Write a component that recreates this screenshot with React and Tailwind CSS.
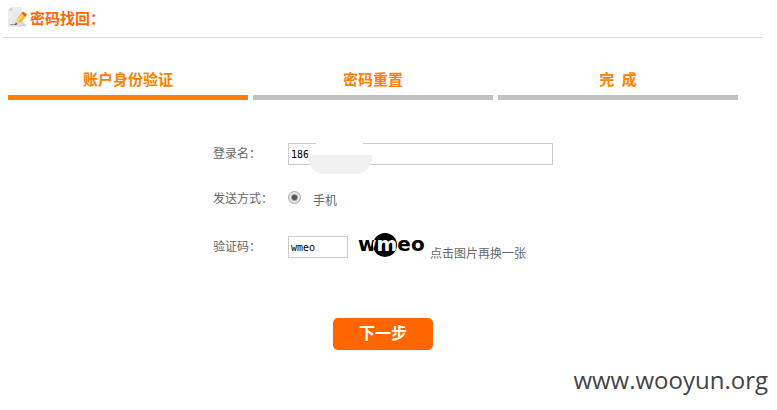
import React, { useState } from "react";

function NotePencilIcon() {
  return (
    <svg width="20" height="20" viewBox="0 0 20 20" aria-hidden="true" className="shrink-0">
      <defs>
        <linearGradient id="paper" x1="0" y1="0" x2="1" y2="1">
          <stop offset="0" stopColor="#f4f4f4" />
          <stop offset="0.6" stopColor="#e4e4e4" />
          <stop offset="1" stopColor="#cfcfcf" />
        </linearGradient>
      </defs>
      <path d="M4 0 H13.500 L15 15 L19 19 Q10 20 0 19.500 V4 Z" fill="url(#paper)" />
      <path d="M0 4 L4 0 L4.500 3.500 Z" fill="#cccccc" />
      <path d="M2 17.500 H9" stroke="#9a9a9a" strokeWidth="1" />
      <path d="M8.500 13 L13.500 6 L18 9.500 L12.500 16 Z" fill="#fbb829" />
      <path d="M10 13.500 L15 7.500" stroke="#ffdc68" strokeWidth="1.800" />
      <path d="M13.500 6.500 L15 4.500 L19 7.500 L17.500 9.800 Z" fill="#d9601f" />
      <path d="M8.500 13 L12.500 16 L7 18 Z" fill="#f1d9a8" />
      <path d="M7.800 15.500 L9.500 17 L6.800 18.200 Z" fill="#3c3c3c" />
    </svg>
  );
}

function Captcha() {
  return (
    <svg width="68" height="30" viewBox="0 0 68 30" role="img" aria-label="wmeo">
      <defs>
        <clipPath id="disc">
          <ellipse cx="27" cy="13" rx="12" ry="12" />
        </clipPath>
      </defs>
      <g fontFamily="'DejaVu Sans', sans-serif" fontWeight="bold" fontSize="20">
        <text x="0" y="19" fill="#000">wmeo</text>
        <ellipse cx="27" cy="13" rx="12" ry="12" fill="#000" />
        <text x="0" y="19" fill="#fff" clipPath="url(#disc)">wmeo</text>
      </g>
    </svg>
  );
}

const steps = ["账户身份验证", "密码重置", "完\u2002成"];

export default function App() {
  const [login, setLogin] = useState("186");
  const [code, setCode] = useState("wmeo");
  const field =
    "h-[22px] border border-[#cccccc] bg-white px-[2px] font-['DejaVu_Sans_Mono',monospace] text-[10px] text-black outline-none";

  return (
    <div className="bg-white pr-[14px] pl-[3px] font-['Liberation_Sans','Noto_Sans_CJK_SC',sans-serif] text-[12px] text-[#666666]">
      <header className="flex h-[38px] items-center gap-[2px] border-b border-[#d9d9d9] pb-[3px] pl-[5px]">
        <NotePencilIcon />
        <h1 className="pt-[3px] text-[15px] leading-5 font-bold text-[#ff6600]">密码找回：</h1>
      </header>

      <ol className="mt-8 mr-[25px] ml-[5px] flex gap-[5px]">
        {steps.map((step, i) => (
          <li
            key={step}
            className={`flex-1 border-b-[5px] pb-[5px] text-center text-[15px] leading-5 font-bold text-[#ff8000] ${
              i === 0 ? "border-[#ff8000]" : "border-[#c1c1c1]"
            }`}
          >
            {step}
          </li>
        ))}
      </ol>

      <form className="mx-auto mt-[43px] w-[340px]" onSubmit={(e) => e.preventDefault()}>
        <div className="flex items-center">
          <label htmlFor="login" className="w-[75px]">登录名：</label>
          <div className="relative flex flex-1">
            <input
              id="login"
              value={login}
              onChange={(e) => setLogin(e.target.value)}
              className={`${field} w-full`}
            />
            <span className="absolute top-0 left-7 h-3 w-[47px] bg-white" />
            <span className="absolute top-3 left-5 h-[19px] w-16 rounded-b-[16px] bg-[#f1f1f1]" />
          </div>
        </div>

        <div className="mt-6 flex h-5 items-start" role="group" aria-labelledby="method">
          <span id="method" className="w-[75px] leading-5">发送方式：</span>
          <label className="flex items-start gap-3 leading-6">
            <input
              type="radio"
              name="method"
              defaultChecked
              className="mt-[2px] size-[13px] appearance-none rounded-full border border-[#a9a9a9] bg-[radial-gradient(circle,#555555_0_2px,#e6e6e6_4px)]"
            />
            手机
          </label>
        </div>

        <div className="mt-[23px] flex h-[30px] items-center">
          <label htmlFor="code" className="w-[75px]">验证码：</label>
          <input
            id="code"
            value={code}
            onChange={(e) => setCode(e.target.value)}
            className={`${field} w-[60px]`}
          />
          <button type="button" className="ml-[10px] flex items-end gap-1">
            <Captcha />
            <span className="whitespace-nowrap leading-4">点击图片再换一张</span>
          </button>
        </div>

        <div className="mt-[56px] flex justify-center">
          <button
            type="submit"
            className="h-8 w-[100px] rounded-[5px] bg-[#ff6600] text-[16px] font-bold text-white"
          >
            下一步
          </button>
        </div>
      </form>

      <footer className="mt-[14px] -mr-[5px] text-right font-['Open_Sans',sans-serif] text-[24px] leading-8 text-[#444444]">
        www.wooyun.org
      </footer>
    </div>
  );
}
